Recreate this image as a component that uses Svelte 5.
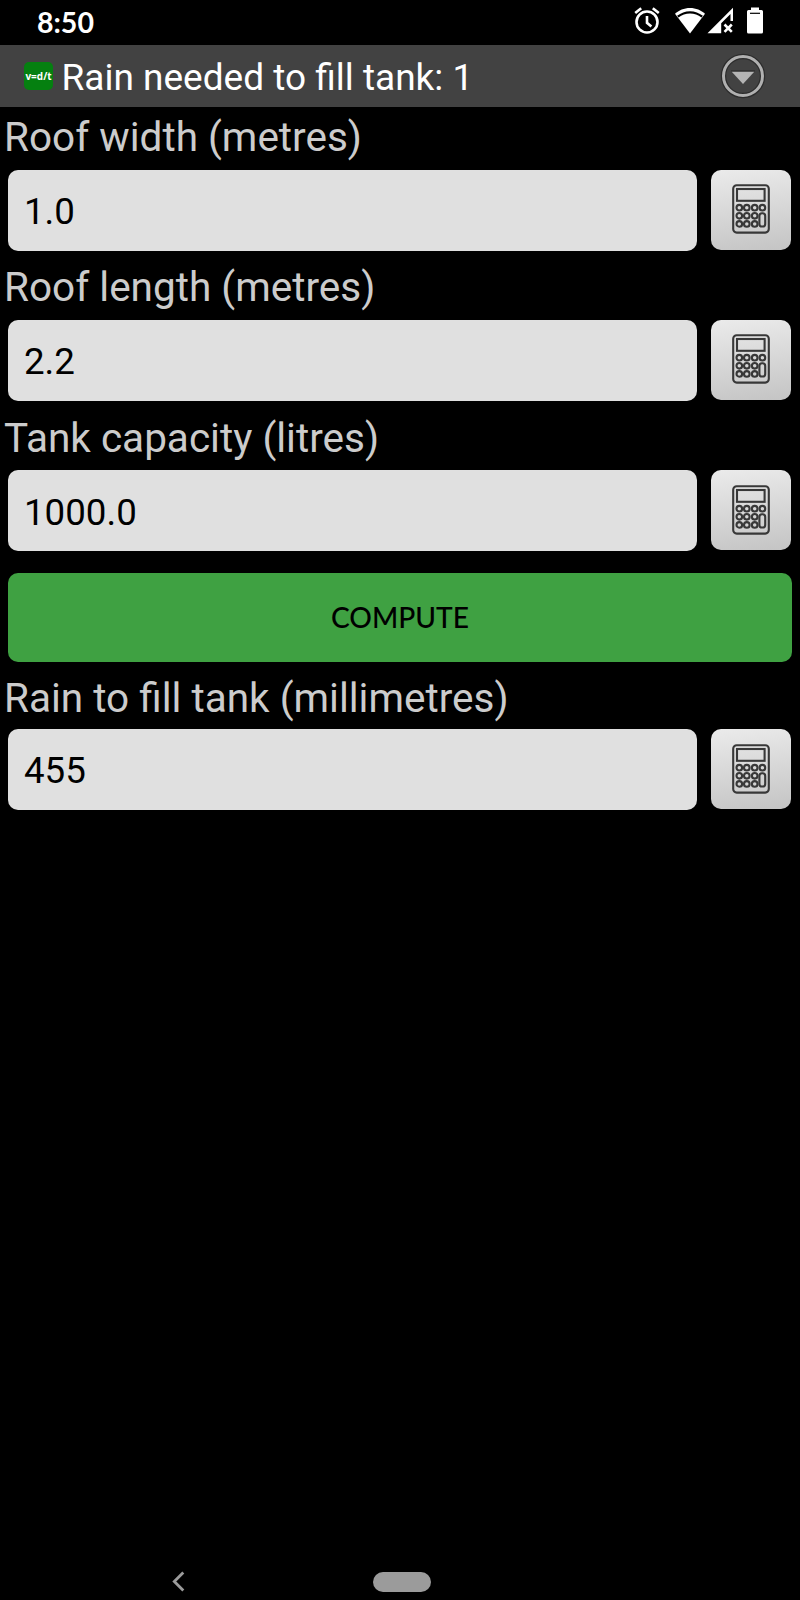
<script>
  let roofWidth = '1.0';
  let roofLength = '2.2';
  let capacity = '1000.0';
  let rain = '455';

  const keyColumns = [7.3, 14.8, 22.7, 30.4];
  const keyRows = [23.7, 31.8, 39.9];

  function compute() {
    const area = parseFloat(roofWidth) * parseFloat(roofLength);
    rain = area > 0 ? String(Math.round(parseFloat(capacity) / area)) : '';
  }
</script>

<svelte:head>
  <title>Rain needed to fill tank</title>
</svelte:head>

{#snippet calcButton(name)}
  <button class="calc" aria-label="Calculator for {name}">
    <svg width="38" height="50" viewBox="0 0 38 50">
      <rect x="1.2" y="1.2" width="35.6" height="47.4" rx="3.5" />
      <rect x="5" y="5" width="27.6" height="11.8" />
      {#each keyRows as cy, row}
        {#each keyColumns as cx, column}
          {#if row === 0 || column < 3}
            <circle {cx} {cy} r="2.8" />
          {/if}
        {/each}
      {/each}
      <rect x="27.4" y="29.3" width="5.8" height="13.2" rx="2.6" />
    </svg>
  </button>
{/snippet}

<div class="screen">
  <div class="status-bar">
    <span class="clock">8:50</span>
    <div class="status-icons">
      <svg class="alarm" width="26" height="27" viewBox="0 0 26 27">
        <circle cx="13" cy="15" r="10.5" fill="none" stroke="#fff" stroke-width="2.6" />
        <path d="M13 9v6.8l4.4 3.6M1.2 6L7.2 1.2M24.8 6L18.8 1.2" fill="none" stroke="#fff" stroke-width="2.6" />
      </svg>
      <svg class="wifi" width="30" height="27" viewBox="0 0 30 27">
        <path d="M15 1C9 1 3.800 3.300 0 6.800L15 26.500L30 6.800C26.200 3.300 21 1 15 1Z" fill="#fff" />
        <path d="M2.800 9.700C10 3.800 20 3.800 27.200 9.700" fill="none" stroke="#000" stroke-width="2.2" />
      </svg>
      <svg class="signal" width="27" height="27" viewBox="0 0 27 27">
        <path d="M0.500 26.300L26 0.800V14H23.500V7L14.200 16.300V26.300Z" fill="#fff" />
        <path d="M17.500 17.500L24.800 24.800M24.800 17.500L17.500 24.800" stroke="#fff" stroke-width="2.6" />
      </svg>
      <svg class="battery" width="16" height="27" viewBox="0 0 16 27">
        <path d="M4 0.500H12V3H14.500Q16 3 16 4.500V25Q16 26.500 14.500 26.500H1.500Q0 26.500 0 25V4.500Q0 3 1.500 3H4Z" fill="#fff" />
        <path d="M3 6.300H13" stroke="#000" stroke-width="1.2" />
      </svg>
    </div>
  </div>

  <header class="title-bar">
    <span class="app-icon">v=d/t</span>
    <h1>Rain needed to fill tank: 1</h1>
    <button class="menu" aria-label="Menu">
      <svg width="46" height="46" viewBox="0 0 46 46">
        <circle cx="23" cy="23" r="19.500" fill="none" stroke="#2c2c2c" stroke-width="5.400" />
        <circle cx="23" cy="23" r="19.500" fill="none" stroke="#b0b0b0" stroke-width="3" />
        <path d="M11.500 18.500H34.500L23 31Z" fill="#b4b4b4" />
        <path d="M11 18H35" stroke="#252525" stroke-width="1" />
      </svg>
    </button>
  </header>

  <main>
    <label for="width">Roof width (metres)</label>
    <div class="row">
      <input id="width" bind:value={roofWidth} />
      {@render calcButton('roof width')}
    </div>

    <label for="length">Roof length (metres)</label>
    <div class="row">
      <input id="length" bind:value={roofLength} />
      {@render calcButton('roof length')}
    </div>

    <label for="capacity">Tank capacity (litres)</label>
    <div class="row">
      <input id="capacity" bind:value={capacity} />
      {@render calcButton('tank capacity')}
    </div>

    <button class="compute" on:click={compute}>COMPUTE</button>

    <label class="result" for="rain">Rain to fill tank (millimetres)</label>
    <div class="row">
      <input id="rain" bind:value={rain} />
      {@render calcButton('rain')}
    </div>
  </main>

  <nav>
    <svg width="14" height="22" viewBox="0 0 14 22">
      <path d="M12.300 1.500L3.300 10.500L12.300 19.500" fill="none" stroke="#9b9b9b" stroke-width="2.800" />
    </svg>
    <span class="home-pill"></span>
  </nav>
</div>

<style>
  :global(body) {
    margin: 0;
    background: #000;
  }

  .screen {
    width: 800px;
    height: 1600px;
    display: flex;
    flex-direction: column;
    overflow: hidden;
    background: #000;
    font-family: Roboto, sans-serif;
  }

  button {
    padding: 0;
    border: 0;
    background: none;
  }

  svg {
    display: block;
    flex: none;
  }

  .status-bar {
    box-sizing: border-box;
    height: 45px;
    padding: 7px 36px 0 37px;
    display: flex;
    align-items: flex-start;
    justify-content: space-between;
    color: #fff;
  }

  .clock {
    font: 700 28.500px/30px Lato, sans-serif;
  }

  .status-icons {
    display: flex;
  }

  .wifi {
    margin-left: 15px;
  }

  .signal {
    margin-left: 2px;
  }

  .battery {
    margin-left: 13px;
    margin-right: 1px;
  }

  .title-bar {
    box-sizing: border-box;
    height: 62px;
    padding: 0 34px 0 24px;
    display: flex;
    align-items: center;
    background: #424242;
  }

  .app-icon {
    width: 29px;
    height: 28px;
    border-radius: 5px;
    background: #058010;
    color: #fff;
    font: 700 10px/28px "Open Sans", sans-serif;
    text-align: center;
  }

  h1 {
    flex: 1;
    margin: 4px 0 0 8.500px;
    color: #fff;
    font-size: 37px;
    font-weight: 400;
    line-height: 44px;
    white-space: nowrap;
  }

  main {
    flex: 1;
    display: flex;
    flex-direction: column;
  }

  label {
    height: 46px;
    margin-top: 7px;
    padding: 0 0 9.500px 4px;
    color: #ccc;
    font-size: 40.500px;
    line-height: 46px;
    white-space: nowrap;
  }

  .result {
    margin-top: 10px;
    padding-bottom: 8px;
  }

  .row {
    height: 81px;
    padding: 0 9px 6.800px 8px;
    display: flex;
    justify-content: space-between;
  }

  input {
    box-sizing: border-box;
    width: 688.500px;
    height: 81px;
    padding: 3px 16px 0;
    border: 0;
    border-radius: 10px;
    outline: 0;
    background: #e0e0e0;
    color: #000;
    font: 36.700px Roboto, sans-serif;
  }

  .calc {
    box-sizing: border-box;
    width: 80px;
    height: 80.300px;
    padding-bottom: 1px;
    display: flex;
    align-items: center;
    justify-content: center;
    border-radius: 10px;
    background: linear-gradient(172deg, #ebebeb, #c4c4c4);
  }

  .calc svg {
    fill: none;
    stroke: #383838;
    stroke-width: 2.100;
  }

  .compute {
    height: 89px;
    margin: 15px 8px 3px;
    border-radius: 10px;
    background: #3fa142;
    color: #000;
    font: 500 28.200px Lato, sans-serif;
  }

  nav {
    height: 29px;
    display: flex;
    padding: 0 0 0 171px;
  }

  .home-pill {
    width: 58px;
    height: 20px;
    margin: 1px 0 0 188px;
    border-radius: 10px;
    background: #9b9b9b;
  }
</style>
